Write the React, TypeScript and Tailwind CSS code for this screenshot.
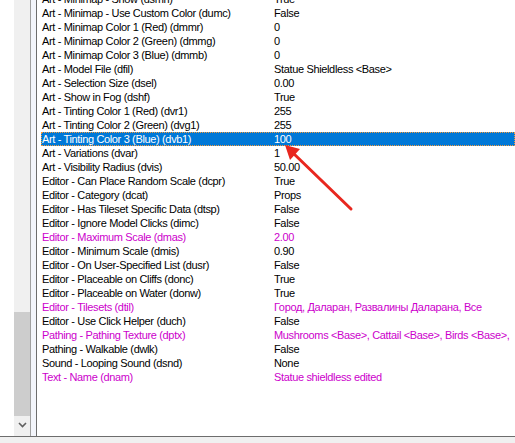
import React from "react";

type Row = { label: string; value: string; mod?: boolean };

const rows: Row[] = [
  { label: "Art - Minimap - Show (dsmh)", value: "True" },
  { label: "Art - Minimap - Use Custom Color (dumc)", value: "False" },
  { label: "Art - Minimap Color 1 (Red) (dmmr)", value: "0" },
  { label: "Art - Minimap Color 2 (Green) (dmmg)", value: "0" },
  { label: "Art - Minimap Color 3 (Blue) (dmmb)", value: "0" },
  { label: "Art - Model File (dfil)", value: "Statue Shieldless <Base>" },
  { label: "Art - Selection Size (dsel)", value: "0.00" },
  { label: "Art - Show in Fog (dshf)", value: "True" },
  { label: "Art - Tinting Color 1 (Red) (dvr1)", value: "255" },
  { label: "Art - Tinting Color 2 (Green) (dvg1)", value: "255" },
  { label: "Art - Tinting Color 3 (Blue) (dvb1)", value: "100" },
  { label: "Art - Variations (dvar)", value: "1" },
  { label: "Art - Visibility Radius (dvis)", value: "50.00" },
  { label: "Editor - Can Place Random Scale (dcpr)", value: "True" },
  { label: "Editor - Category (dcat)", value: "Props" },
  { label: "Editor - Has Tileset Specific Data (dtsp)", value: "False" },
  { label: "Editor - Ignore Model Clicks (dimc)", value: "False" },
  { label: "Editor - Maximum Scale (dmas)", value: "2.00", mod: true },
  { label: "Editor - Minimum Scale (dmis)", value: "0.90" },
  { label: "Editor - On User-Specified List (dusr)", value: "False" },
  { label: "Editor - Placeable on Cliffs (donc)", value: "True" },
  { label: "Editor - Placeable on Water (donw)", value: "True" },
  { label: "Editor - Tilesets (dtil)", value: "Город, Даларан, Развалины Даларана, Все", mod: true },
  { label: "Editor - Use Click Helper (duch)", value: "False" },
  { label: "Pathing - Pathing Texture (dptx)", value: "Mushrooms <Base>, Cattail <Base>, Birds <Base>,", mod: true },
  { label: "Pathing - Walkable (dwlk)", value: "False" },
  { label: "Sound - Looping Sound (dsnd)", value: "None" },
  { label: "Text - Name (dnam)", value: "Statue shieldless edited", mod: true },
];

const SELECTED = 10;

export default function App() {
  return (
    <div
      className="relative w-[515px] h-[443px] overflow-hidden bg-white flex flex-col text-[11px] tracking-[-0.35px]"
      style={{ fontFamily: '"Liberation Sans", Arial, sans-serif' }}
    >
      <div className="flex h-[436px]">
        {/* left margin */}
        <div className="w-[14px] bg-white" />

        {/* vertical scrollbar */}
        <div className="w-[16px] bg-[#f0f0f0] flex flex-col">
          <div className="flex-1" />
          <div className="h-[104px] bg-[#cdcdcd]" />
          <div className="h-[17px] flex items-center justify-center">
            <svg width="9" height="6" viewBox="0 0 9 6">
              <path d="M1 1 L4.5 4.5 L8 1" fill="none" stroke="#606060" strokeWidth="1.6" />
            </svg>
          </div>
          <div className="h-[3px]" />
        </div>

        {/* splitter borders */}
        <div className="w-[1px] bg-[#a0a0a0]" />
        <div className="w-[5px] bg-[#f3f5fb]" />
        <div className="w-[1px] bg-[#6d6d6d]" />

        {/* property list */}
        <div className="flex-1 overflow-hidden bg-white pl-[4px]">
          <div className="-mt-[8px]">
            {rows.map((r, i) => {
              const sel = i === SELECTED;
              const color = sel ? "text-white" : r.mod ? "text-[#cc00cc]" : "text-black";
              return (
                <div
                  key={r.label}
                  className={`flex h-[14px] leading-[14px] whitespace-nowrap ${color} ${
                    sel ? "bg-[#0078d7] outline outline-1 outline-dotted outline-[#f59b3c] -outline-offset-1" : ""
                  }`}
                >
                  <div className="w-[233px] shrink-0 pl-[1px]">{r.label}</div>
                  <div className="shrink-0">{r.value}</div>
                </div>
              );
            })}
          </div>
        </div>
      </div>

      {/* bottom border */}
      <div className="h-[1px] bg-[#6d6d6d]" />
      <div className="flex-1 bg-[#f0f0f0]" />

      {/* red annotation arrow */}
      <svg className="absolute left-0 top-0 pointer-events-none" width="515" height="443">
        <line x1="351" y1="209" x2="293" y2="153" stroke="#e8271f" strokeWidth="3" strokeLinecap="round" />
        <polygon points="285,145 300,149 290,160" fill="#e8271f" />
      </svg>
    </div>
  );
}
